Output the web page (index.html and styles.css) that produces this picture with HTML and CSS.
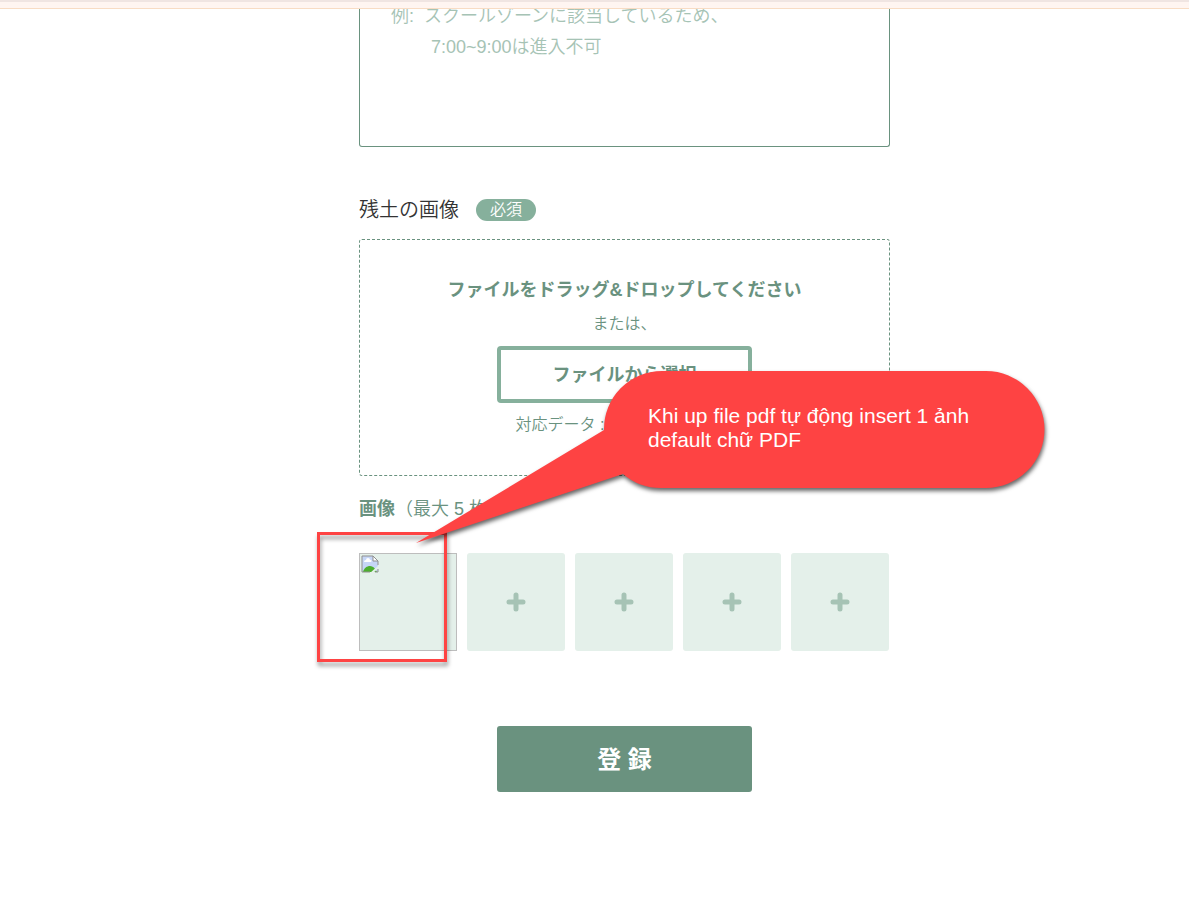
FILE: index.html
```html
<!DOCTYPE html>
<html lang="ja">
<head>
    <meta charset="UTF-8">
    <meta name="viewport" content="width=device-width, initial-scale=1.0">
    <title>残土の登録</title>
    <link rel="stylesheet" href="styles.css">
</head>
<body>

    <header class="topbar"></header>

    <main class="page">
        <form class="form">
            <textarea class="note" aria-label="備考" placeholder="例:  スクールゾーンに該当しているため、&#10;        7:00~9:00は進入不可"></textarea>

            <div class="field-head">
                <h2 class="field-title">残土の画像</h2>
                <span class="badge">必須</span>
            </div>

            <div class="dropzone">
                <p class="drop-title">ファイルをドラッグ&amp;ドロップしてください</p>
                <p class="drop-text">または、</p>
                <button type="button" class="file-button">ファイルから選択</button>
                <p class="drop-text">対応データ : JPG / PNG / PDF</p>
            </div>

            <p class="thumb-label"><strong>画像</strong>（最大 5 枚）</p>

            <div class="thumbs">
                <div class="thumb thumb-broken">
                    <!-- 読み込めない画像のアイコン -->
                    <svg width="18" height="18" viewBox="0 0 18 18">
                        <path d="M1 1h11l5 5v11H1z" fill="#c6d6f6"/>
                        <path d="M3 7a2 2 0 0 1 2-2 2 2 0 0 1 4 0 1 1 0 0 1 1 2z" fill="#fff"/>
                        <path d="M2 17c1-4 4-6 7-6s5 2 7 6z" fill="#4caf2f"/>
                        <path d="M12 1v5h5z" fill="#fff"/>
                        <path d="M18 10 9 18h3l6-5z" fill="#e4f0ea"/>
                        <path d="M9 17H1V1h11l5 5v4M12 1v5h5M17 14v3h-3" fill="none" stroke="#8f8f8f"/>
                    </svg>
                </div>
                <button type="button" class="thumb" aria-label="画像を追加">
                    <svg width="20" height="20" viewBox="0 0 20 20"><path d="M10 3v14M3 10h14" class="plus"/></svg>
                </button>
                <button type="button" class="thumb" aria-label="画像を追加">
                    <svg width="20" height="20" viewBox="0 0 20 20"><path d="M10 3v14M3 10h14" class="plus"/></svg>
                </button>
                <button type="button" class="thumb" aria-label="画像を追加">
                    <svg width="20" height="20" viewBox="0 0 20 20"><path d="M10 3v14M3 10h14" class="plus"/></svg>
                </button>
                <button type="button" class="thumb" aria-label="画像を追加">
                    <svg width="20" height="20" viewBox="0 0 20 20"><path d="M10 3v14M3 10h14" class="plus"/></svg>
                </button>
            </div>

            <button type="submit" class="submit">登 録</button>

            <!-- 注釈 -->
            <div class="marker"></div>
            <div class="callout">
                <svg class="callout-shape" width="628" height="172" viewBox="0 0 628 172">
                    <path d="M188 59A58 58 0 0 1 246 0H570A58 58 0 0 1 570 117H246A58 58 0 0 1 207 103L0 172Z" fill="#fe4343"/>
                </svg>
                <p class="callout-text">Khi up file pdf tự động insert 1 ảnh default chữ PDF</p>
            </div>
        </form>
    </main>

</body>
</html>
```
FILE: styles.css
```css
* {
    box-sizing: border-box;
}

body {
    margin: 0;
    background-color: #fff;
    color: #333;
    font-family: "Liberation Sans", "Noto Sans CJK JP", sans-serif;
    font-size: 18px;
    font-weight: 350;
}

p, h2 {
    margin: 0;
}

button {
    font-family: inherit;
    cursor: pointer;
}

.topbar {
    position: fixed;
    top: 0;
    left: 0;
    right: 0;
    z-index: 5;
    height: 9px;
    background-color: #fff5f1;
    border-top: 2px solid #f0e5e2;
    border-bottom: 1px solid #f8dcc4;
}

.page {
    padding-left: 60px;
}

.form {
    position: relative;
    display: flex;
    flex-direction: column;
    max-width: 531px;
    margin: 0 auto;
}

.note {
    height: 147px;
    padding: 1px 31px;
    border: 1px solid #6a927f;
    border-top: none;
    border-radius: 0 0 3px 3px;
    font: inherit;
    line-height: 31px;
    resize: none;
}

.note::placeholder {
    color: #a6c3b5;
}

.field-head {
    display: flex;
    align-items: center;
    gap: 17px;
    margin-top: 48px;
}

.field-title {
    font-size: 20px;
    font-weight: inherit;
    line-height: 30px;
}

.badge {
    padding: 0 14px;
    border-radius: 11px;
    background-color: #86b09c;
    color: #fff;
    font-size: 16px;
    line-height: 22px;
}

.dropzone {
    display: flex;
    flex-direction: column;
    align-items: center;
    gap: 10px;
    margin-top: 14px;
    padding: 38px 20px;
    border: 1px dashed #6a927f;
    border-radius: 3px;
    color: #6a927f;
}

.drop-title {
    font-weight: bold;
    line-height: 24px;
}

.drop-text {
    font-size: 16px;
    line-height: 24px;
}

.file-button {
    width: 255px;
    height: 57px;
    padding: 0 0 4px;
    border: 4px solid #86b09c;
    border-radius: 4px;
    background-color: #fff;
    color: #6a927f;
    font-size: 18px;
    font-weight: bold;
}

.thumb-label {
    margin-top: 18px;
    color: #6a927f;
    line-height: 30px;
}

.thumbs {
    display: grid;
    grid-template-columns: repeat(5, 1fr);
    gap: 10px;
    margin-top: 29px;
    padding-right: 1px;
}

.thumb {
    display: flex;
    align-items: center;
    justify-content: center;
    aspect-ratio: 1;
    padding: 0;
    border: none;
    border-radius: 3px;
    background-color: #e4f0ea;
}

.thumb-broken {
    align-items: flex-start;
    justify-content: flex-start;
    padding: 1px;
    border: 1px solid #bdbdbd;
    border-radius: 0;
}

.plus {
    stroke: #a6c3b5;
    stroke-width: 5;
    stroke-linecap: round;
}

.submit {
    align-self: center;
    width: 255px;
    height: 66px;
    margin-top: 75px;
    padding: 0 0 4px;
    border: none;
    border-radius: 3px;
    background-color: #6a927f;
    color: #fff;
    font-size: 24px;
    font-weight: bold;
}

.marker {
    position: absolute;
    top: 532px;
    left: -42px;
    width: 130px;
    height: 130px;
    border: 3px solid #fe4343;
    filter: drop-shadow(1px 4px 2px rgba(0, 0, 0, 0.4));
}

.callout {
    position: absolute;
    top: 371px;
    left: 57px;
    width: 628px;
}

.callout-shape {
    display: block;
    overflow: visible;
    filter: drop-shadow(1px 3px 2px rgba(0, 0, 0, 0.6));
}

.callout-text {
    position: absolute;
    top: 33px;
    left: 232px;
    width: 340px;
    color: #fff;
    font-size: 21px;
    line-height: 24px;
}
```
